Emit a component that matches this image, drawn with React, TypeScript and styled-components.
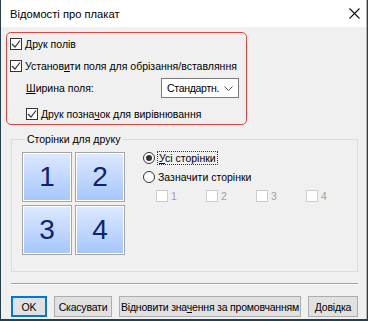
import styled, { createGlobalStyle } from "styled-components";

const GlobalStyle = createGlobalStyle`
  html, body {
    margin: 0;
    padding: 0;
    background: #263f48;
  }
  body {
    font-family: "Liberation Sans", Arial, sans-serif;
    font-size: 10.5px;
    color: #000000;
    white-space: nowrap;
  }
  * {
    box-sizing: border-box;
  }
`;

const Window = styled.div`
  margin-left: 1px;
  width: 366px;
  height: 319px;
  background: #f0f0f0;
  border-right: 1px solid #b4b4b4;
  display: flex;
  flex-direction: column;
`;

const TitleBar = styled.div`
  height: 27px;
  flex-shrink: 0;
  background: #ffffff;
  display: flex;
  align-items: center;
  justify-content: space-between;
  padding: 0 6px 0 9px;
`;

const Title = styled.span`
  font-size: 11.2px;
`;

const Body = styled.div`
  flex: 1;
  display: flex;
  flex-direction: column;
  padding: 5px 8px 0 5px;
`;

const Highlight = styled.div`
  width: 241px;
  height: 93px;
  border: 1.5px solid #e8423c;
  border-radius: 5px;
  padding: 3px 0 0 3px;
  display: flex;
  flex-direction: column;
`;

const Row = styled.label<{ $indent?: number; $top?: number }>`
  display: flex;
  align-items: center;
  gap: 3px;
  height: 16px;
  margin-left: ${({ $indent }) => $indent ?? 0}px;
  margin-top: ${({ $top }) => $top ?? 0}px;
`;

const FieldRow = styled.div`
  display: flex;
  align-items: center;
  justify-content: space-between;
  margin: 4px 7px 0 16px;
  height: 20px;
`;

const Box = styled.span<{ $disabled?: boolean }>`
  width: 12px;
  height: 12px;
  flex-shrink: 0;
  border: 1px solid ${({ $disabled }) => ($disabled ? "#cccccc" : "#333333")};
  background: #ffffff;
  display: flex;
  align-items: center;
  justify-content: center;
`;

const Mn = styled.span`
  text-decoration: underline;
`;

const Select = styled.div`
  width: 78px;
  height: 20px;
  background: #ffffff;
  border: 1px solid #7a7a7a;
  display: flex;
  align-items: center;
  justify-content: space-between;
  padding: 0 5px 0 5px;
  letter-spacing: -0.3px;
`;

const Group = styled.fieldset`
  margin: 8px 0 0 5px;
  width: 347px;
  height: 139px;
  border: 1px solid #dcdcdc;
  padding: 7px 0 0 10px;
  display: flex;
  gap: 18px;
`;

const Legend = styled.legend`
  padding: 0 2px;
  margin-left: 3px;
`;

const Tiles = styled.div`
  display: grid;
  grid-template-columns: 50px 50px;
  grid-auto-rows: 50px;
  gap: 3px;
`;

const Tile = styled.div`
  border: 1px solid #a5a5a5;
  box-shadow: inset 0 0 0 1px #ffffff;
  background: linear-gradient(#dde9ff, #a6c6fb);
  display: flex;
  align-items: center;
  justify-content: center;
  font-family: "Liberation Sans", Arial, sans-serif;
  font-size: 28px;
  color: #102270;
`;

const Options = styled.div`
  display: flex;
  flex-direction: column;
  margin-top: -2px;
`;

const Radio = styled.span<{ $checked?: boolean }>`
  width: 12px;
  height: 12px;
  border: 1px solid #333333;
  border-radius: 50%;
  background: #ffffff;
  display: flex;
  align-items: center;
  justify-content: center;
  flex-shrink: 0;
  &::after {
    content: "";
    width: 6px;
    height: 6px;
    border-radius: 50%;
    background: ${({ $checked }) => ($checked ? "#333333" : "transparent")};
  }
`;

const Focus = styled.span`
  outline: 1px dotted #333333;
  outline-offset: 0;
  padding: 0 1px;
`;

const PageBoxes = styled.div`
  display: flex;
  margin: 5px 0 0 13px;
`;

const PageBox = styled.label`
  width: 50px;
  display: flex;
  align-items: center;
  gap: 3px;
  color: #a0a0a0;
`;

const Separator = styled.div`
  margin: 11px 0 0 5px;
  width: 347px;
  border-top: 1px solid #a0a0a0;
  border-bottom: 1px solid #ffffff;
`;

const Buttons = styled.div`
  display: flex;
  gap: 7px;
  margin: 11px 0 0 5px;
`;

const Button = styled.button<{ $w: number; $default?: boolean }>`
  width: ${({ $w }) => $w}px;
  height: 21px;
  padding: 0;
  font-family: "Liberation Sans", Arial, sans-serif;
  font-size: 10.5px;
  letter-spacing: -0.2px;
  color: #000000;
  background: #e1e1e1;
  white-space: nowrap;
  border: ${({ $default }) => ($default ? "2px solid #0078d7" : "1px solid #adadad")};
`;

const Check = () => (
  <svg width="10" height="10" viewBox="0 0 10 10">
    <polyline points="1,5 4,8 9,1.5" fill="none" stroke="#333333" strokeWidth="1.2" />
  </svg>
);

const Chevron = () => (
  <svg width="9" height="5" viewBox="0 0 9 5">
    <polyline points="0.5,0.5 4.5,4.5 8.5,0.5" fill="none" stroke="#555555" strokeWidth="1" />
  </svg>
);

const CloseIcon = () => (
  <svg width="11" height="11" viewBox="0 0 11 11">
    <path d="M0.5 0.5 L10.5 10.5 M10.5 0.5 L0.5 10.5" stroke="#111111" strokeWidth="1.1" />
  </svg>
);

const App = () => {
  return (
    <>
      <GlobalStyle />
      <Window>
        <TitleBar>
          <Title>Відомості про плакат</Title>
          <CloseIcon />
        </TitleBar>
        <Body>
          <Highlight>
            <Row>
              <Box>
                <Check />
              </Box>
              <span>
                <Mn>Д</Mn>рук полів
              </span>
            </Row>
            <Row $top={6}>
              <Box>
                <Check />
              </Box>
              <span>
                Установ<Mn>и</Mn>ти поля для обрізання/вставляння
              </span>
            </Row>
            <FieldRow>
              <span>
                <Mn>Ш</Mn>ирина поля:
              </span>
              <Select>
                <span>Стандартн.</span>
                <Chevron />
              </Select>
            </FieldRow>
            <Row $indent={16} $top={8}>
              <Box>
                <Check />
              </Box>
              <span>
                Друк позна<Mn>ч</Mn>ок для вирівнювання
              </span>
            </Row>
          </Highlight>
          <Group>
            <Legend>Сторінки для друку</Legend>
            <Tiles>
              <Tile>1</Tile>
              <Tile>2</Tile>
              <Tile>3</Tile>
              <Tile>4</Tile>
            </Tiles>
            <Options>
              <Row>
                <Radio $checked />
                <Focus>
                  <Mn>У</Mn>сі сторінки
                </Focus>
              </Row>
              <Row $top={3}>
                <Radio />
                <span>Зазначити сторінки</span>
              </Row>
              <PageBoxes>
                {[1, 2, 3, 4].map((n) => (
                  <PageBox key={n}>
                    <Box $disabled />
                    <span>{n}</span>
                  </PageBox>
                ))}
              </PageBoxes>
            </Options>
          </Group>
          <Separator />
          <Buttons>
            <Button $w={36} $default>
              OK
            </Button>
            <Button $w={58}>Скасувати</Button>
            <Button $w={182}>
              Відновити зна<Mn>ч</Mn>ення за промовчанням
            </Button>
            <Button $w={50}>
              <Mn>Д</Mn>овідка
            </Button>
          </Buttons>
        </Body>
      </Window>
    </>
  );
};

export default App;
